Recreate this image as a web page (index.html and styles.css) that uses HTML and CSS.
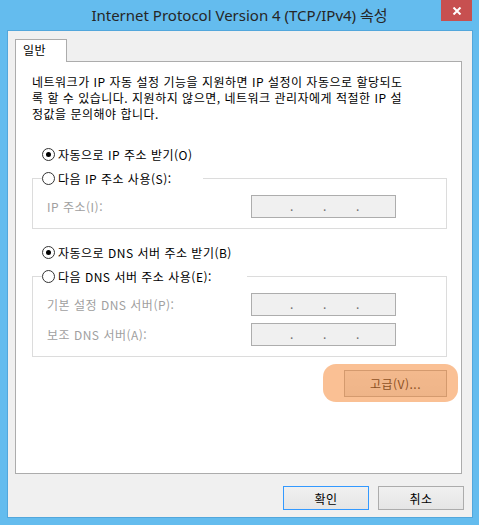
FILE: index.html
```html
<!DOCTYPE html>
<html lang="ko">
  <head>
    <meta charset="UTF-8" />
    <title>Internet Protocol Version 4 (TCP/IPv4) 속성</title>
    <link rel="stylesheet" href="styles.css">
  </head>
  <body>
    <div class="window">
      <div class="titlebar">
        <div class="title">Internet Protocol Version 4 (TCP/IPv4) <span class="ko">속성</span></div>
        <div class="close">
          <svg width="10" height="8" viewBox="0 0 10 8">
            <path d="M1.5 0.5 L8.5 7.5 M8.5 0.5 L1.5 7.5" stroke="#fff" stroke-width="2" fill="none" />
          </svg>
        </div>
      </div>

      <div class="client">
        <div class="tabs">
          <div class="tab">일반</div>
        </div>

        <div class="panel">
          <p class="intro">네트워크가 IP 자동 설정 기능을 지원하면 IP 설정이 자동으로 할당되도<br>록 할 수 있습니다. 지원하지 않으면, 네트워크 관리자에게 적절한 IP 설<br>정값을 문의해야 합니다.</p>

          <div class="option auto"><span class="radio checked"></span>자동으로 IP 주소 받기(O)</div>
          <fieldset class="group">
            <legend class="option legend-ip"><span class="radio"></span>다음 IP 주소 사용(S):</legend>
            <div class="field">
              <span>IP 주소(I):</span>
              <div class="ipbox"><span>.</span><span>.</span><span>.</span></div>
            </div>
          </fieldset>

          <div class="option auto dns"><span class="radio checked"></span>자동으로 DNS 서버 주소 받기(B)</div>
          <fieldset class="group">
            <legend class="option legend-dns"><span class="radio"></span>다음 DNS 서버 주소 사용(E):</legend>
            <div class="field">
              <span>기본 설정 DNS 서버(P):</span>
              <div class="ipbox"><span>.</span><span>.</span><span>.</span></div>
            </div>
            <div class="field">
              <span>보조 DNS 서버(A):</span>
              <div class="ipbox"><span>.</span><span>.</span><span>.</span></div>
            </div>
          </fieldset>

          <div class="adv">
            <div class="highlight">
              <button class="btn btn-adv">고급(V)...</button>
            </div>
          </div>
        </div>

        <div class="footer">
          <button class="btn default">확인</button>
          <button class="btn">취소</button>
        </div>
      </div>
    </div>
  </body>
</html>
```

FILE: styles.css
```css
body {
  margin: 0;
  font-family: "Noto Sans CJK KR", sans-serif;
  font-size: 12px;
  letter-spacing: 0.5px;
  color: #000;
}
.window {
  width: 479px;
  height: 525px;
  box-sizing: border-box;
  background: #64bcee;
  padding: 0 6px 7px 7px;
  display: flex;
  flex-direction: column;
}
.titlebar {
  height: 30px;
  margin: 0 -6px 0 -7px;
  display: grid;
  grid-template-columns: 1fr auto 1fr;
}
.title {
  grid-column: 2;
  padding-top: 5px;
  font-family: "Noto Sans", "Noto Sans CJK KR", sans-serif;
  font-size: 15px;
  line-height: 20px;
  letter-spacing: 0;
  color: #262626;
  white-space: nowrap;
}
.title .ko {
  font-family: "Noto Sans CJK KR", sans-serif;
}
.close {
  grid-column: 3;
  justify-self: end;
  width: 31px;
  height: 21px;
  margin-right: 7px;
  background: #c75050;
  display: flex;
  align-items: center;
  justify-content: center;
  padding-top: 1px;
  box-sizing: border-box;
}
.client {
  flex: 1;
  display: flex;
  flex-direction: column;
  background: #f0f0f0;
  border: 1px solid #52a7dc;
  padding: 8px 8px 7px 7px;
}
.tabs {
  display: flex;
}
.tab {
  position: relative;
  width: 52px;
  height: 23px;
  box-sizing: border-box;
  margin-bottom: -1px;
  padding: 2px 0 0 7px;
  border: 1px solid #acacac;
  border-bottom: 0;
  background: #fff;
  line-height: 15px;
}
.panel {
  flex: 1;
  margin-right: 2px;
  padding: 12px 14px 0 16px;
  background: #fff;
  border: 1px solid #acacac;
}
.intro {
  margin: 0;
  line-height: 16px;
}
.option {
  display: flex;
  align-items: center;
  gap: 3px;
  height: 15px;
  line-height: 15px;
  white-space: nowrap;
}
.radio {
  width: 13px;
  height: 13px;
  box-sizing: border-box;
  border: 1px solid #333;
  border-radius: 50%;
  background: #fff;
  display: flex;
  align-items: center;
  justify-content: center;
}
.radio.checked::after {
  content: "";
  width: 5px;
  height: 5px;
  border-radius: 50%;
  background: #000;
}
.auto {
  margin: 25px 0 0 10px;
}
.auto.dns {
  margin-top: 16px;
}
.group {
  margin: 9px 0 0;
  padding: 9px 50px 10px 14px;
  border: 1px solid #dcdcdc;
  min-width: 0;
}
.group legend {
  padding: 0;
  margin-left: -5px;
}
.legend-ip {
  width: 161px;
}
.legend-dns {
  width: 205px;
}
.field {
  display: flex;
  justify-content: space-between;
  align-items: center;
  color: #a0a0a0;
}
.field + .field {
  margin-top: 7px;
}
.ipbox {
  width: 145px;
  height: 23px;
  box-sizing: border-box;
  padding: 0 0 2px 38px;
  border: 1px solid #adadad;
  background: #f0f0f0;
  display: flex;
  align-items: center;
  gap: 30px;
  color: #6d6d6d;
  line-height: 15px;
  letter-spacing: 0;
}
.ipbox span {
  width: 3px;
  text-align: center;
}
.adv {
  display: flex;
  justify-content: flex-end;
  margin-top: 13px;
}
.highlight {
  position: relative;
  display: flex;
}
.highlight::after {
  content: "";
  position: absolute;
  left: -21px;
  right: -11px;
  top: -6px;
  bottom: -5px;
  border-radius: 13px;
  background: rgba(245, 140, 60, 0.55);
}
.btn {
  width: 86px;
  height: 24px;
  padding: 0;
  font-family: "Noto Sans CJK KR", sans-serif;
  font-size: 12px;
  letter-spacing: 0.5px;
  color: #000;
  background: linear-gradient(#f0f0f0, #e5e5e5);
  border: 1px solid #acacac;
  border-radius: 0;
}
.btn-adv {
  width: 103px;
  height: 27px;
}
.btn.default {
  border-color: #3399ff;
}
.footer {
  display: flex;
  justify-content: flex-end;
  gap: 9px;
  margin-top: 12px;
}
```
